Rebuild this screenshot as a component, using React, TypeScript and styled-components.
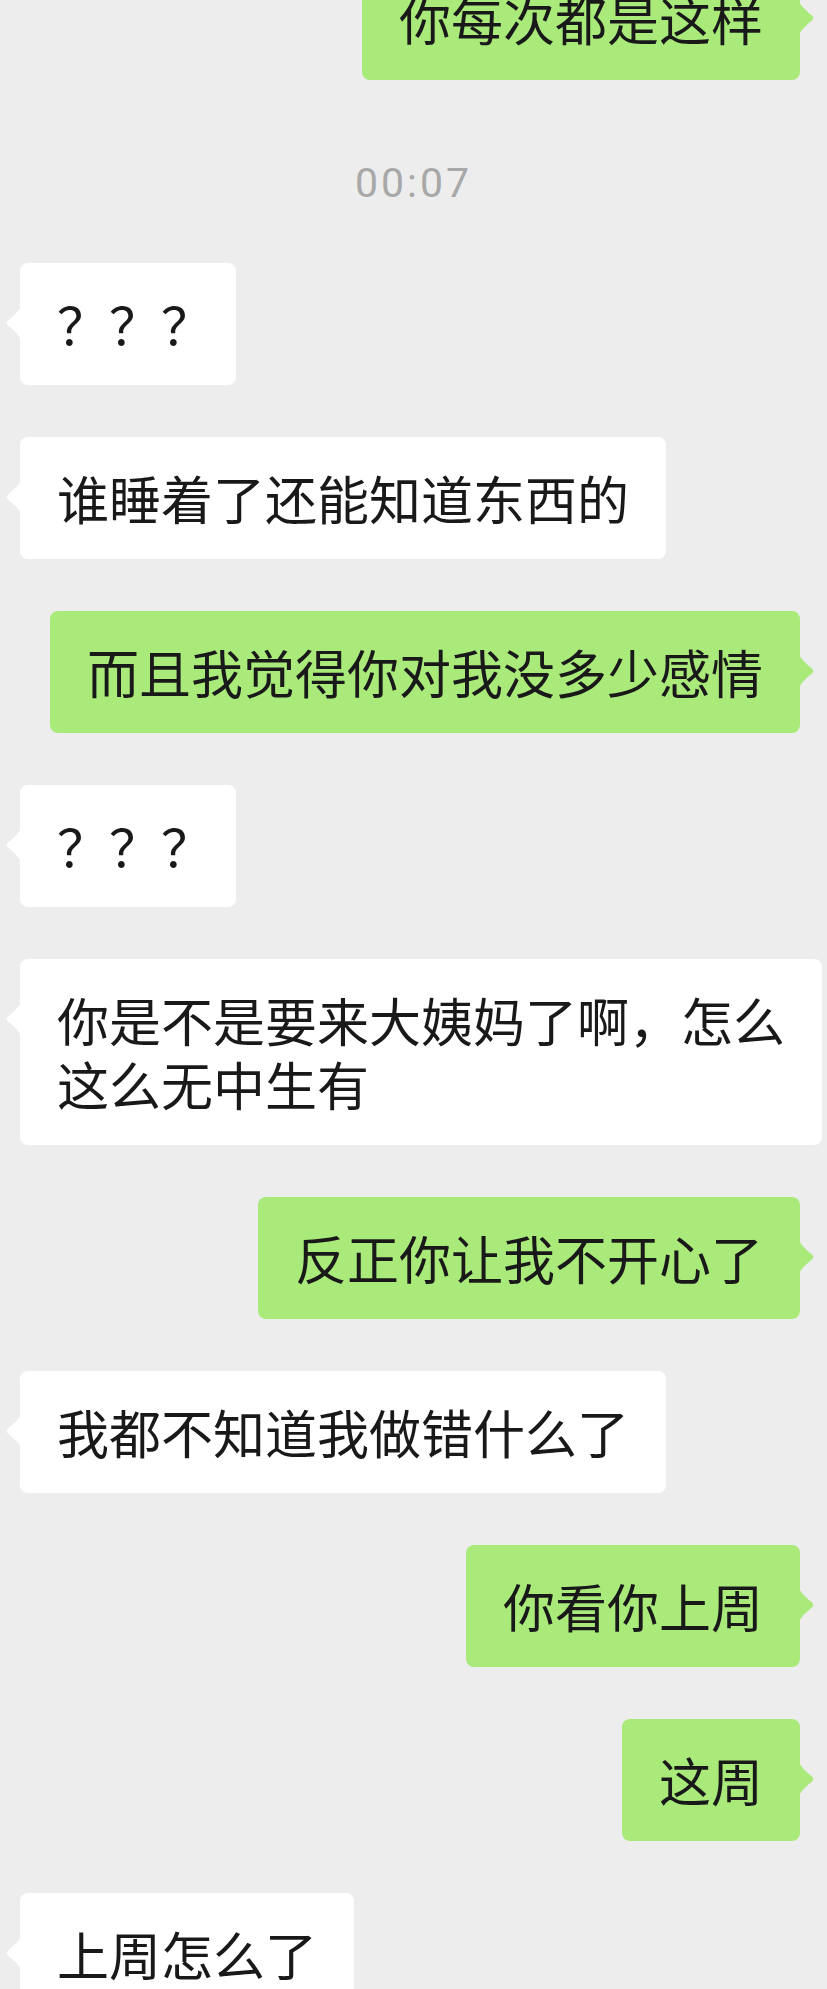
import React from "react";
import styled, { createGlobalStyle } from "styled-components";

const GlobalStyle = createGlobalStyle`
  html, body {
    margin: 0;
    padding: 0;
    background: #ededed;
    overflow: hidden;
  }
  body {
    font-family: "Noto Sans CJK SC", "Noto Sans", sans-serif;
  }
`;

type Side = "left" | "right";

const Chat = styled.main`
  display: flex;
  flex-direction: column;
  gap: 52px;
  margin-top: -42px;
`;

const Row = styled.div<{ $side: Side }>`
  display: flex;
  justify-content: ${(p) => (p.$side === "right" ? "flex-end" : "flex-start")};
  padding: ${(p) => (p.$side === "right" ? "0 27px 0 20px" : "0 0 0 20px")};
`;

const Bubble = styled.div<{ $side: Side; $tight?: boolean }>`
  position: relative;
  box-sizing: border-box;
  max-width: 806px;
  padding: 29px ${(p) => (p.$tight ? "23px" : "37px")} 29px 37px;
  border-radius: 8px;
  background: ${(p) => (p.$side === "right" ? "#a9ea7a" : "#ffffff")};
  color: #191919;
  font-size: 52px;
  line-height: 64px;
  white-space: pre-line;
  word-break: break-all;
`;

const Tail = styled.svg<{ $side: Side }>`
  position: absolute;
  top: 42px;
  width: 16px;
  height: 36px;
  ${(p) => (p.$side === "right" ? "right: -15px;" : "left: -15px; transform: scaleX(-1);")}
  fill: ${(p) => (p.$side === "right" ? "#a9ea7a" : "#ffffff")};
`;

const Time = styled.div`
  margin-top: 19px;
  padding-top: 5px;
  text-align: center;
  font-family: Roboto, "Liberation Sans", sans-serif;
  font-size: 41px;
  letter-spacing: 3px;
  line-height: 55px;
  color: #a8a8a8;
`;

type Msg = { side: Side; text: string; tight?: boolean } | { time: string };

const messages: Msg[] = [
  { side: "right", text: "你每次都是这样" },
  { time: "00:07" },
  { side: "left", text: "？？？", tight: true },
  { side: "left", text: "谁睡着了还能知道东西的" },
  { side: "right", text: "而且我觉得你对我没多少感情" },
  { side: "left", text: "？？？", tight: true },
  { side: "left", text: "你是不是要来大姨妈了啊，怎么\n这么无中生有" },
  { side: "right", text: "反正你让我不开心了" },
  { side: "left", text: "我都不知道我做错什么了" },
  { side: "right", text: "你看你上周" },
  { side: "right", text: "这周" },
  { side: "left", text: "上周怎么了" },
];

function Message({ side, text, tight }: { side: Side; text: string; tight?: boolean }) {
  return (
    <Row $side={side}>
      <Bubble $side={side} $tight={tight}>
        <Tail $side={side} viewBox="0 0 16 36" aria-hidden="true">
          <path d="M0 0 C1 5 4 8 13 15.5 Q15.5 18 13 20.5 C4 28 1 31 0 36 Z" />
        </Tail>
        {text}
      </Bubble>
    </Row>
  );
}

export default function App() {
  return (
    <>
      <GlobalStyle />
      <Chat>
        {messages.map((m, i) =>
          "time" in m ? (
            <Time key={i}>{m.time}</Time>
          ) : (
            <Message key={i} side={m.side} text={m.text} tight={m.tight} />
          )
        )}
      </Chat>
    </>
  );
}
